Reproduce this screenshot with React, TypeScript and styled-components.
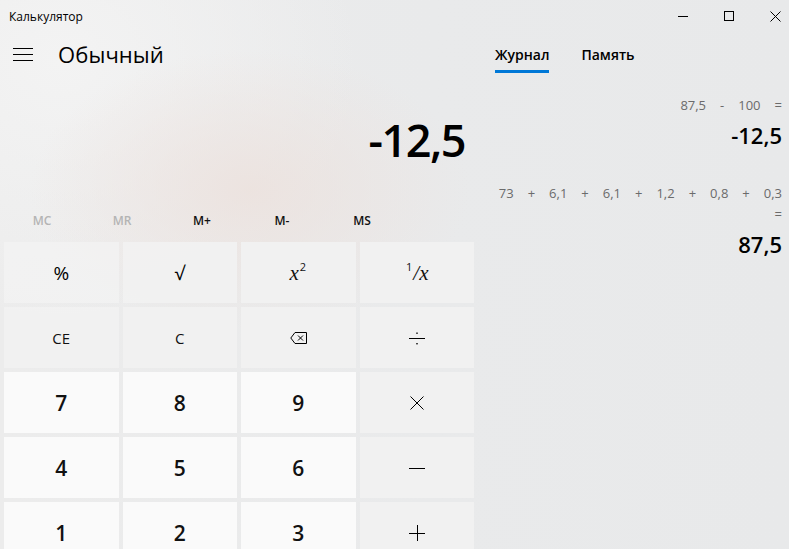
import styled, { createGlobalStyle } from 'styled-components';

const GlobalStyle = createGlobalStyle`
  html, body {
    margin: 0;
    padding: 0;
  }
  body {
    font-family: 'Segoe UI', 'Open Sans', 'Noto Sans', sans-serif;
    color: #000;
  }
`;

const Window = styled.div`
  width: 789px;
  height: 549px;
  overflow: hidden;
  display: flex;
  flex-direction: column;
  background:
    radial-gradient(ellipse 220px 140px at 250px 190px, rgba(236, 226, 222, 0.9), transparent),
    radial-gradient(ellipse 300px 260px at 60px 60px, rgba(243, 243, 243, 1), transparent),
    linear-gradient(90deg, #ececec 0%, #e9eaeb 55%, #e8e9ea 100%);
`;

const TitleBar = styled.div`
  height: 32px;
  display: flex;
  align-items: center;
  justify-content: space-between;
  padding: 0 8px 0 9px;
  font-size: 12px;
`;

const WindowControls = styled.div`
  display: flex;
  align-items: center;
  gap: 36px;
`;

const Main = styled.div`
  flex: 1;
  display: grid;
  grid-template-columns: 478px 1fr;
  min-height: 0;
`;

const LeftPane = styled.section`
  display: flex;
  flex-direction: column;
`;

const ModeHeader = styled.div`
  height: 44px;
  display: flex;
  align-items: center;
  padding-left: 13px;
  gap: 25px;
`;

const ModeTitle = styled.h1`
  margin: 0;
  font-size: 22px;
  font-weight: 400;
  letter-spacing: 0.1px;
`;

const Display = styled.div`
  height: 124px;
  box-sizing: border-box;
  display: flex;
  align-items: flex-start;
  justify-content: flex-end;
  padding: 41px 13px 0 0;
  font-size: 45px;
  font-weight: 600;
  line-height: 1;
  letter-spacing: -1.5px;
`;

const MemoryRow = styled.div`
  height: 40px;
  display: grid;
  grid-template-columns: repeat(5, 80px);
  padding-left: 2px;
  align-items: center;
`;

const MemoryKey = styled.span<{ $disabled?: boolean }>`
  text-align: center;
  font-size: 12px;
  font-weight: 600;
  color: ${(p) => (p.$disabled ? '#b4b4b4' : '#111')};
`;

const Keypad = styled.div`
  width: 470px;
  display: grid;
  grid-template-columns: repeat(4, 1fr);
  grid-auto-rows: 61px;
  gap: 4px;
  padding: 2px 0 0 4px;
`;

const Key = styled.div<{ $digit?: boolean }>`
  display: flex;
  align-items: center;
  justify-content: center;
  background: ${(p) => (p.$digit ? '#fafafa' : 'rgba(242, 242, 242, 0.9)')};
  font-size: ${(p) => (p.$digit ? '21px' : '15px')};
  font-weight: ${(p) => (p.$digit ? 600 : 400)};
  color: #111;
`;

const Glyph = styled.span`
  font-size: 19px;
  font-weight: 400;
  color: #000;
`;

const MathX = styled.span`
  font-family: 'Liberation Serif', 'DejaVu Serif', serif;
  font-style: italic;
  font-size: 21px;
`;

const Sup = styled.sup`
  font-family: 'Segoe UI', 'Open Sans', sans-serif;
  font-style: normal;
  font-size: 11px;
  vertical-align: 9px;
  margin: 0 1px;
`;

const RightPane = styled.section`
  display: flex;
  flex-direction: column;
  padding: 0 7px 0 17px;
`;

const Tabs = styled.div`
  height: 41px;
  display: flex;
  gap: 32px;
`;

const Tab = styled.div<{ $active?: boolean }>`
  display: flex;
  align-items: center;
  font-size: 14px;
  font-weight: 600;
  border-bottom: 3px solid ${(p) => (p.$active ? '#0078d7' : 'transparent')};
  padding-top: 6px;
`;

const History = styled.div`
  display: flex;
  flex-direction: column;
  align-items: flex-end;
  gap: 33px;
  padding-top: 22px;
`;

const Entry = styled.div`
  display: flex;
  flex-direction: column;
  align-items: flex-end;
`;

const Expression = styled.div`
  display: flex;
  flex-wrap: wrap;
  justify-content: flex-end;
  column-gap: 14px;
  max-width: 287px;
  font-size: 13px;
  line-height: 21px;
  color: #6b6b6b;
`;

const Result = styled.div`
  font-size: 22px;
  font-weight: 600;
  line-height: 30px;
  margin-top: 4px;
`;

type HistoryItem = { tokens: string[]; result: string };

const history: HistoryItem[] = [
  { tokens: ['87,5', '-', '100', '='], result: '-12,5' },
  {
    tokens: ['73', '+', '6,1', '+', '6,1', '+', '1,2', '+', '0,8', '+', '0,3', '='],
    result: '87,5',
  },
];

function Minimize() {
  return (
    <svg width="10" height="10" viewBox="0 0 10 10">
      <path d="M0 5.5h10" stroke="#000" strokeWidth="1" />
    </svg>
  );
}

function Maximize() {
  return (
    <svg width="10" height="10" viewBox="0 0 10 10">
      <rect x="0.5" y="0.5" width="9" height="9" fill="none" stroke="#000" strokeWidth="1" />
    </svg>
  );
}

function Close() {
  return (
    <svg width="11" height="11" viewBox="0 0 11 11">
      <path d="M0.5 0.5l10 10M10.5 0.5l-10 10" stroke="#000" strokeWidth="1" />
    </svg>
  );
}

function Hamburger() {
  return (
    <svg width="20" height="14" viewBox="0 0 20 14">
      <path d="M0 1.5h20M0 7.5h20M0 13.5h20" stroke="#000" strokeWidth="1.2" />
    </svg>
  );
}

function Backspace() {
  return (
    <svg width="17" height="12" viewBox="0 0 17 12">
      <path d="M5 0.5h11.5v11H5L0.8 6z" fill="none" stroke="#000" strokeWidth="1" />
      <path d="M8 3.5l5 5M13 3.5l-5 5" stroke="#000" strokeWidth="1" />
    </svg>
  );
}

function Op({ kind }: { kind: 'div' | 'mul' | 'sub' | 'add' }) {
  return (
    <svg width="16" height="16" viewBox="0 0 16 16">
      {kind === 'div' && (
        <>
          <path d="M0 8.5h16" stroke="#000" strokeWidth="1" />
          <rect x="7.3" y="2.5" width="1.4" height="1.4" fill="#000" />
          <rect x="7.3" y="13" width="1.4" height="1.4" fill="#000" />
        </>
      )}
      {kind === 'mul' && <path d="M1.5 1.5l13 13M14.5 1.5l-13 13" stroke="#000" strokeWidth="1" />}
      {kind === 'sub' && <path d="M0 8.5h16" stroke="#000" strokeWidth="1" />}
      {kind === 'add' && <path d="M0 8.5h16M8.5 0v16" stroke="#000" strokeWidth="1" />}
    </svg>
  );
}

export default function App() {
  return (
    <>
      <GlobalStyle />
      <Window>
        <TitleBar>
          <span>Калькулятор</span>
          <WindowControls>
            <Minimize />
            <Maximize />
            <Close />
          </WindowControls>
        </TitleBar>
        <Main>
          <LeftPane>
            <ModeHeader>
              <Hamburger />
              <ModeTitle>Обычный</ModeTitle>
            </ModeHeader>
            <Display>-12,5</Display>
            <MemoryRow>
              <MemoryKey $disabled>MC</MemoryKey>
              <MemoryKey $disabled>MR</MemoryKey>
              <MemoryKey>M+</MemoryKey>
              <MemoryKey>M-</MemoryKey>
              <MemoryKey>MS</MemoryKey>
            </MemoryRow>
            <Keypad>
              <Key>
                <Glyph>%</Glyph>
              </Key>
              <Key>
                <Glyph>√</Glyph>
              </Key>
              <Key>
                <MathX>
                  x<Sup>2</Sup>
                </MathX>
              </Key>
              <Key>
                <MathX>
                  <Sup>1</Sup>/x
                </MathX>
              </Key>

              <Key>CE</Key>
              <Key>C</Key>
              <Key>
                <Backspace />
              </Key>
              <Key>
                <Op kind="div" />
              </Key>

              <Key $digit>7</Key>
              <Key $digit>8</Key>
              <Key $digit>9</Key>
              <Key>
                <Op kind="mul" />
              </Key>

              <Key $digit>4</Key>
              <Key $digit>5</Key>
              <Key $digit>6</Key>
              <Key>
                <Op kind="sub" />
              </Key>

              <Key $digit>1</Key>
              <Key $digit>2</Key>
              <Key $digit>3</Key>
              <Key>
                <Op kind="add" />
              </Key>
            </Keypad>
          </LeftPane>
          <RightPane>
            <Tabs>
              <Tab $active>Журнал</Tab>
              <Tab>Память</Tab>
            </Tabs>
            <History>
              {history.map((item, i) => (
                <Entry key={i}>
                  <Expression>
                    {item.tokens.map((t, j) => (
                      <span key={j}>{t}</span>
                    ))}
                  </Expression>
                  <Result>{item.result}</Result>
                </Entry>
              ))}
            </History>
          </RightPane>
        </Main>
      </Window>
    </>
  );
}
